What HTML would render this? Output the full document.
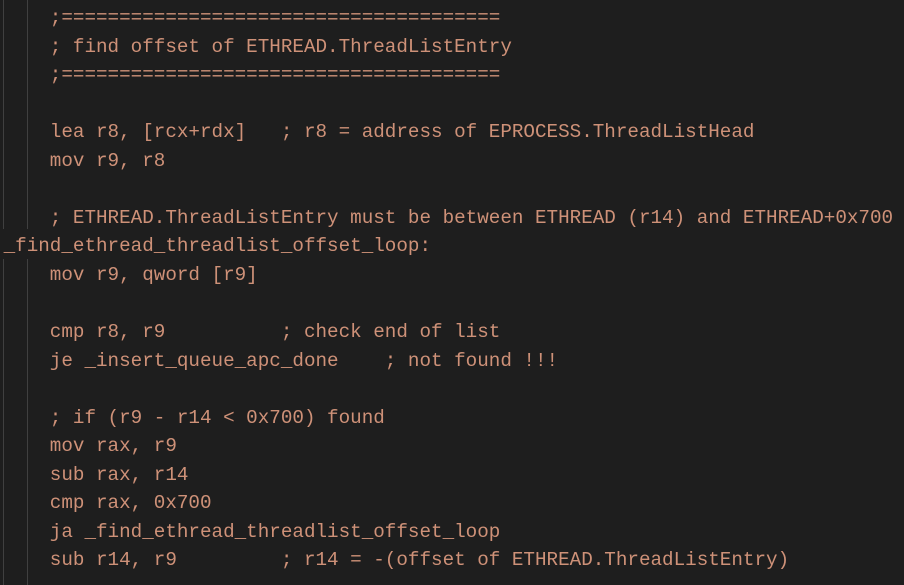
<!DOCTYPE html>
<html><head><style>
html,body{margin:0;background:#1e1e1e;width:904px;height:585px;overflow:hidden}
.g{position:absolute;top:0;width:1px;background:#404040}
pre{position:absolute;left:3.6px;top:4px;margin:0;font-family:"Liberation Mono",monospace;font-size:19.25px;line-height:28.55px;color:#ce9178;white-space:pre}
</style></head><body>
<div class="g" style="left:3px;height:229px"></div>
<div class="g" style="left:3px;top:259px;height:326px"></div>
<div class="g" style="left:27px;height:229px"></div>
<div class="g" style="left:27px;top:259px;height:326px"></div>
<pre>    ;======================================
    ; find offset of ETHREAD.ThreadListEntry
    ;======================================

    lea r8, [rcx+rdx]   ; r8 = address of EPROCESS.ThreadListHead
    mov r9, r8

    ; ETHREAD.ThreadListEntry must be between ETHREAD (r14) and ETHREAD+0x700
_find_ethread_threadlist_offset_loop:
    mov r9, qword [r9]

    cmp r8, r9          ; check end of list
    je _insert_queue_apc_done    ; not found !!!

    ; if (r9 - r14 &lt; 0x700) found
    mov rax, r9
    sub rax, r14
    cmp rax, 0x700
    ja _find_ethread_threadlist_offset_loop
    sub r14, r9         ; r14 = -(offset of ETHREAD.ThreadListEntry)</pre>
</body></html>
